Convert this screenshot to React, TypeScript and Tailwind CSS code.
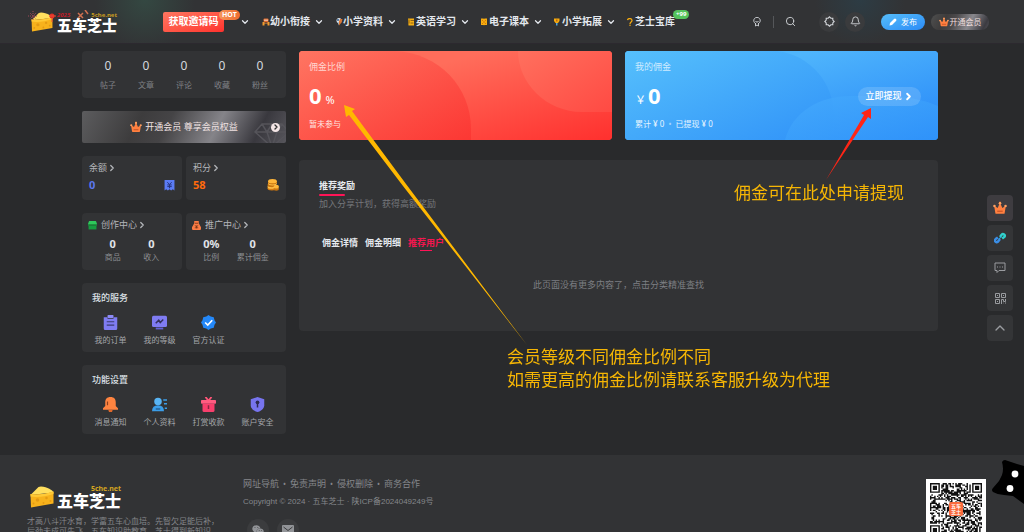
import type { ReactNode } from 'react'
import { Bell, ChevronDown, ChevronRight, ChevronUp, Search } from 'lucide-react'
import { FaWeixin } from 'react-icons/fa'

const stats = ['帖子', '文章', '评论', '收藏', '粉丝']

function Crown({ className }: { className: string }) {
  return (
    <svg viewBox="0 0 24 24" className={className} fill="none">
      <path d="M2 8l6 4 3-7a2 2 0 1 1 2 0l3 7 6-4-2 12.500a1.500 1.500 0 0 1-1.500 1.500h-13A1.500 1.500 0 0 1 4 20.500z" fill="#ff8040" />
      <circle cx="12" cy="4" r="2.200" fill="#ffa060" />
      <circle cx="2.500" cy="8.500" r="2.200" fill="#ffa060" />
      <circle cx="21.500" cy="8.500" r="2.200" fill="#ffa060" />
      <path d="M8 17.500h8" stroke="#b8441c" strokeWidth="1.600" strokeLinecap="round" />
    </svg>
  )
}

function Cheese({ className }: { className: string }) {
  return (
    <svg viewBox="0 0 48 44" className={className}>
      <path d="M1 18L17 2q2-1 5-1c13 1 23 7 25 12z" fill="#ffdf5e" />
      <path d="M1 16c13 3 31 0 46-5v24L2 43z" fill="#f7b21c" />
      <path d="M1 16c13 3 31 0 46-5v5C31 21 14 23 1 21z" fill="#ffc936" />
      <circle cx="15" cy="28" r="3.500" fill="#e39a14" />
      <circle cx="33" cy="24" r="2.500" fill="#e39a14" />
      <circle cx="27" cy="34" r="2" fill="#e39a14" />
      <circle cx="7" cy="35" r="2" fill="#e39a14" />
      <circle cx="41" cy="30" r="2" fill="#e39a14" />
    </svg>
  )
}

function NavIcon({ kind }: { kind: string }) {
  return (
    <svg viewBox="0 0 16 16" className="h-2 w-2 shrink-0" fill="none">
      {kind === 'kids' && (
        <>
          <rect x="3" y="1" width="10" height="7" rx="2" fill="#e06c2e" />
          <path d="M5 3h2v3H5zM9 3h2v3H9z" fill="#fff" />
          <path d="M1 8h14v7h-4v-4H5v4H1z" fill="#f29a2e" />
          <path d="M5 8h6v2H5z" fill="#7b4534" />
        </>
      )}
      {kind === 'pen' && (
        <>
          <circle cx="8" cy="5" r="5" fill="#dce6ee" />
          <path d="M4 2h4v4H4z" fill="#5b7fa6" />
          <path d="M10 2h5l-2 7-5 6-1-6z" fill="#dd7733" />
          <path d="M5 8h3v7z" fill="#a8c4d8" />
        </>
      )}
      {kind === 'word' && (
        <>
          <path d="M0 1h12v14H1z" fill="#f5b016" />
          <path d="M5 5h7M5 10h6M2 3v8" stroke="#6e4a12" strokeWidth="1.500" />
        </>
      )}
      {kind === 'book' && (
        <>
          <path d="M0 1h5l1 1 1-1h5v13H7l-1 1-1-1H0z" fill="#f7ac0f" />
          <path d="M2 4l3 3M10 4L7 7M2 12l3-3M10 12L7 9" stroke="#c36a0a" strokeWidth="1.500" />
        </>
      )}
      {kind === 'bulb' && (
        <>
          <path d="M0 1h11v5l-3 4H3L0 6z" fill="#f7ac0f" />
          <path d="M4 3h3v4H4z" fill="#b9650e" />
          <path d="M4 10h3v5H4z" fill="#4aa3df" />
        </>
      )}
      {kind === 'help' && (
        <>
          <path d="M1 4c1-4 9-4 9 1 0 3-4 3-4 7" stroke="#f7ac0f" strokeWidth="2.500" />
          <circle cx="6" cy="14.500" r="1.500" fill="#f7ac0f" />
        </>
      )}
    </svg>
  )
}

const navItems = [
  { kind: 'kids', label: '幼小衔接' },
  { kind: 'pen', label: '小学资料' },
  { kind: 'word', label: '英语学习' },
  { kind: 'book', label: '电子课本' },
  { kind: 'bulb', label: '小学拓展' },
]

function Header() {
  return (
    <header className="flex h-11 shrink-0 items-center border-b border-[#2c292f] bg-[#323335] bg-[radial-gradient(circle_at_145px_0px,#344842_0px,transparent_50px),radial-gradient(circle_at_860px_0px,#2d3c44_0px,transparent_45px)] pr-[35px] pl-[31px]">
      <a href="#" className="relative flex shrink-0 items-center gap-1">
        <Cheese className="h-5 w-[22px]" />
        <span className="flex flex-col">
          <span className="flex justify-between text-[6px] leading-[6px] font-bold text-[#c79a20]">
            <i className="text-[#c01c28]">2025</i>
            5che.net
          </span>
          <span className="text-[15px] leading-[14px] font-black text-white">五车芝士</span>
        </span>
        <svg viewBox="0 0 64 16" className="absolute -top-[2px] -left-1 h-4 w-16" fill="none">
          <path d="M6 1v10M1 6h10M3 3l6 6M9 3L3 9" stroke="#9b4a58" strokeWidth="1" strokeDasharray="1 1" />
          <circle cx="25" cy="6" r="2.500" fill="#e03328" />
          <path d="M25 8v4M22 6h7" stroke="#f04a32" />
          <path d="M51 3l5 5M56 3l-5 5M58 0l3 4" stroke="#cf7050" strokeWidth="1.500" />
        </svg>
      </a>

      <nav className="ml-[46px] flex shrink-0 items-center text-[10px] font-bold text-[#e4e8ee]">
        <div className="relative mr-3 flex items-center gap-4">
          <button className="h-5 w-[61px] rounded-xs bg-linear-to-br from-[#ff7560] to-[#ff2f2c] text-white">获取邀请码</button>
          <ChevronDown className="h-[10px] w-[10px]" strokeWidth={3} />
          <span className="absolute -top-[2px] left-14 rounded-full bg-linear-to-r from-[#f5975a] to-[#f06a2c] px-[3px] text-[7px] leading-[10px] text-white">HOT</span>
        </div>
        {navItems.map((item) => (
          <a key={item.kind} href="#" className="mr-[11px] flex items-center">
            <NavIcon kind={item.kind} />
            <span className="mr-1">{item.label}</span>
            <ChevronDown className="h-[10px] w-[10px]" strokeWidth={3} />
          </a>
        ))}
        <a href="#" className="relative flex items-center">
          <NavIcon kind="help" />
          芝士宝库
          <span className="absolute -top-1 left-[46px] rounded-full bg-[#55c35c] px-[3px] text-[6px] leading-[9px] text-white">+99</span>
        </a>
      </nav>

      <div className="ml-auto flex shrink-0 items-center text-[#d3d6da]">
        <button aria-label="签到">
          <svg viewBox="0 0 20 20" className="h-[10px] w-[10px]" fill="none" stroke="currentColor" strokeWidth="1.800">
            <path d="M7 13a6.500 6.500 0 1 1 6 0M7 8c1 3 5 3 6 0M7 12v6l3-2 3 2v-6" />
          </svg>
        </button>
        <span className="mx-[11px] h-3 w-px bg-[#55575a]" />
        <button aria-label="搜索">
          <Search className="h-[11px] w-[11px]" />
        </button>
        <button aria-label="切换主题" className="ml-[23px] flex h-5 w-5 items-center justify-center rounded-full bg-[#3a3b3d]">
          <svg viewBox="0 0 20 20" className="h-[11px] w-[11px]" fill="none" stroke="currentColor" strokeWidth="2">
            <path d="M10 1.500l2.500 2.500h3.500v3.500l2.500 2.500-2.500 2.500V16h-3.500L10 18.500 7.500 16H4v-3.500L1.500 10 4 7.500V4h3.500z" />
          </svg>
        </button>
        <button aria-label="通知" className="ml-[6px] flex h-5 w-5 items-center justify-center rounded-full bg-[#3a3b3d]">
          <Bell className="h-[11px] w-[11px]" />
        </button>
        <button className="ml-4 flex h-4 w-11 items-center justify-center gap-1 rounded-full bg-linear-to-br from-[#56bdfa] to-[#2c8bf6] text-[8px] text-white">
          <svg viewBox="0 0 16 16" className="h-2 w-2" fill="currentColor">
            <path d="M1 15l1-5 8-8q2-2 4 0t0 4l-8 8z" />
          </svg>
          发布
        </button>
        <button className="ml-[6px] flex h-4 w-[58px] items-center justify-center gap-px rounded-full bg-[linear-gradient(117deg,#4b4b4b_5%,#3e3c3c_25%,#4b494b_40%,#89888d_65%,#3b3a40_90%,#55555b_100%)] text-[8px] text-[#f0dede]">
          <Crown className="h-[10px] w-[10px]" />
          开通会员
        </button>
      </div>
    </header>
  )
}

function Card({ className = '', children }: { className?: string; children: ReactNode }) {
  return <section className={`rounded-sm bg-[#323335] ${className}`}>{children}</section>
}

function More({ children }: { children: ReactNode }) {
  return (
    <a href="#" className="flex items-center text-[9px] leading-3 text-[#b4b6ba]">
      {children}
      <ChevronRight className="h-[10px] w-[10px]" strokeWidth={3} />
    </a>
  )
}

function Figures({ items }: { items: { value: string; label: string }[] }) {
  return (
    <dl className="mt-[6px] flex justify-evenly text-center">
      {items.map((item) => (
        <div key={item.label} className="flex flex-col-reverse">
          <dt className="text-[8px] leading-3 text-[#8b8d91]">{item.label}</dt>
          <dd className="text-[11px] leading-[14px] font-bold text-[#e2e5ea]">{item.value}</dd>
        </div>
      ))}
    </dl>
  )
}

const services = [
  {
    label: '我的订单',
    icon: (
      <>
        <path d="M1 3h5v2h8V3h5v15q0 2-2 2H3q-2 0-2-2z" fill="#7f7cf2" />
        <rect x="6" y="0" width="8" height="4" rx="1" fill="#8d8af8" />
        <path d="M5 9h10M5 13.500h10" stroke="#3d3b72" strokeWidth="1.600" />
      </>
    ),
  },
  {
    label: '我的等级',
    icon: (
      <>
        <rect x="0" y="1" width="20" height="15" rx="2" fill="#7f7cf2" />
        <path d="M5 11l4-4 2 3 4-4" stroke="#33315c" strokeWidth="2" />
        <path d="M5 18h10" stroke="#6461d6" strokeWidth="2.500" />
      </>
    ),
  },
  {
    label: '官方认证',
    icon: (
      <>
        <path d="M10 0l3 2 4 1 1 4 2 3-2 3-1 4-4 1-3 2-3-2-4-1-1-4-2-3 2-3 1-4 4-1z" fill="#2488f8" />
        <path d="M5.500 10l3.500 3.500 6-6.500" stroke="#fff" strokeWidth="2.200" />
      </>
    ),
  },
]

const settings = [
  {
    label: '消息通知',
    icon: (
      <>
        <path d="M10 0c5 0 7 3 7 7v5l3 3v2H0v-2l3-3V7c0-4 2-7 7-7z" fill="#ff8440" />
        <path d="M7 17h6l-1 3H8z" fill="#e0682a" />
        <path d="M6 6v5" stroke="#8c3f1c" strokeWidth="1.600" />
      </>
    ),
  },
  {
    label: '个人资料',
    icon: (
      <>
        <circle cx="8" cy="6" r="5" fill="#58b4f4" />
        <path d="M0 19q0-8 8-8t8 8z" fill="#3b9de8" />
        <path d="M15 4h5M16 9h4M17 15h3" stroke="#3b9de8" strokeWidth="1.800" />
        <path d="M5 16h6" stroke="#1d4f7b" strokeWidth="1.500" />
      </>
    ),
  },
  {
    label: '打赏收款',
    icon: (
      <>
        <path d="M10 5L6 0M10 5l4-5" stroke="#ff5578" strokeWidth="2.500" />
        <rect x="0" y="4" width="20" height="5" rx="1" fill="#ff5c80" />
        <path d="M2 9h16v9q0 2-2 2H4q-2 0-2-2z" fill="#f83f6c" />
        <path d="M10 11v5" stroke="#8a2440" strokeWidth="2" />
      </>
    ),
  },
  {
    label: '账户安全',
    icon: (
      <>
        <path d="M10 0l9 3v8c0 5-5 8-9 9-4-1-9-4-9-9V3z" fill="#7774ee" />
        <circle cx="10" cy="7" r="2.500" fill="#2c2a50" />
        <path d="M10 8v6" stroke="#2c2a50" strokeWidth="2" />
      </>
    ),
  },
]

function IconGrid({ title, items }: { title: string; items: typeof services }) {
  return (
    <Card className="px-1 pt-2 pb-[5px]">
      <h2 className="pl-[6px] text-[9px] leading-[14px] font-medium text-[#dde1e7]">{title}</h2>
      <div className="mt-[10px] grid grid-cols-4">
        {items.map((item) => (
          <a key={item.label} href="#" className="flex flex-col items-center gap-[3px] text-[8px] leading-[14px] text-[#a4a6aa]">
            <svg viewBox="0 0 20 20" className="h-[15px] w-[15px]" fill="none">
              {item.icon}
            </svg>
            {item.label}
          </a>
        ))}
      </div>
    </Card>
  )
}

function Sidebar() {
  return (
    <aside className="flex w-[204px] shrink-0 flex-col gap-[13px]">
      <Card className="flex px-[7px] py-[6px]">
        {stats.map((label) => (
          <a key={label} href="#" className="flex flex-1 flex-col items-center gap-[3px]">
            <span className="text-[12px] leading-[18px] text-[#d5d9df]">0</span>
            <span className="text-[8px] leading-[14px] text-[#7f8185]">{label}</span>
          </a>
        ))}
      </Card>

      <a
        href="#"
        className="relative flex h-8 items-center justify-center gap-[3px] overflow-hidden rounded-xs bg-[linear-gradient(117deg,#5c5c5e_0%,#3d3c3d_28%,#454446_42%,#858489_65%,#39383e_85%,#57565c_100%)] text-[9px] text-[#f0e2e2]"
      >
        <Crown className="h-3 w-3" />
        开通会员 尊享会员权益
        <svg viewBox="0 0 36 24" className="absolute -right-1 -bottom-1 h-6 w-9" fill="none" stroke="#55545a" strokeWidth="1.500">
          <path d="M8 1h20l7 8-17 15L1 9zM1 9h34M8 1l5 8 5 15 5-15 5-8M13 9l5-8 5 8" />
        </svg>
        <span className="absolute right-[6px] flex h-[9px] w-[9px] items-center justify-center rounded-full bg-[#f4e6e6] text-[#333]">
          <ChevronRight className="h-2 w-2" strokeWidth={4} />
        </span>
      </a>

      <div className="grid grid-cols-2 gap-1">
        <Card className="px-[7px] pt-[6px] pb-[7px]">
          <More>余额</More>
          <div className="mt-[3px] flex items-center justify-between">
            <span className="text-[11px] leading-4 font-bold text-[#5c78ee]">0</span>
            <svg viewBox="0 0 20 20" className="h-[11px] w-[11px]" fill="none">
              <path d="M1 0h18v19l-3-2-3 2-3-2-3 2-3-2-3 2z" fill="#5b7cf5" />
              <path d="M6 4l4 4 4-4M10 8v7M6 9h8M6 12h8" stroke="#26357c" strokeWidth="1.800" />
            </svg>
          </div>
        </Card>
        <Card className="px-[7px] pt-[6px] pb-[7px]">
          <More>积分</More>
          <div className="mt-[3px] flex items-center justify-between">
            <span className="text-[11px] leading-4 font-bold text-[#ff6a0c]">58</span>
            <svg viewBox="0 0 22 22" className="h-3 w-3">
              <ellipse cx="9" cy="17" rx="8" ry="4" fill="#d67a10" />
              <ellipse cx="9" cy="14" rx="8" ry="4" fill="#ffc04a" />
              <ellipse cx="9" cy="11" rx="8" ry="4" fill="#c87410" />
              <ellipse cx="10" cy="8" rx="8" ry="4" fill="#ffc04a" />
              <ellipse cx="10" cy="6" rx="8" ry="4" fill="#c87410" />
              <ellipse cx="10" cy="4" rx="8" ry="4" fill="#ffb63a" />
              <ellipse cx="17" cy="18" rx="5" ry="3.500" fill="#c87410" />
              <ellipse cx="17" cy="14" rx="5" ry="3.500" fill="#ffb63a" />
            </svg>
          </div>
        </Card>
      </div>

      <div className="grid grid-cols-2 gap-1">
        <Card className="pt-[6px] pb-[7px]">
          <div className="flex items-center gap-1 pl-[6px]">
            <svg viewBox="0 0 16 16" className="h-[9px] w-[9px]">
              <path d="M2 0h12l2 5v3H0V5z" fill="#2fc85c" />
              <path d="M1 8h14v7H1z" fill="#179c40" />
              <path d="M0 6h16v2H0z" fill="#15702f" />
            </svg>
            <More>创作中心</More>
          </div>
          <Figures items={[{ value: '0', label: '商品' }, { value: '0', label: '收入' }]} />
        </Card>
        <Card className="pt-[6px] pb-[7px]">
          <div className="flex items-center gap-1 pl-[6px]">
            <svg viewBox="0 0 16 16" className="h-[9px] w-[9px]" fill="none">
              <path d="M4 0h8v4l4 7v3q0 2-2 2H2q-2 0-2-2v-3l4-7z" fill="#fb7c45" />
              <path d="M5 4h6M8 8v5M5 8l3 2 3-2M5 12h6" stroke="#713016" strokeWidth="1.400" />
            </svg>
            <More>推广中心</More>
          </div>
          <Figures items={[{ value: '0%', label: '比例' }, { value: '0', label: '累计佣金' }]} />
        </Card>
      </div>

      <IconGrid title="我的服务" items={services} />
      <IconGrid title="功能设置" items={settings} />
    </aside>
  )
}

function CommissionCards() {
  return (
    <div className="grid grid-cols-2 gap-[13px] text-white">
      <section className="relative overflow-hidden rounded-sm bg-[#fb4a42] px-[10px] pt-[10px] pb-[9px]">
        <svg viewBox="0 0 313 89" preserveAspectRatio="none" className="absolute inset-0 h-full w-full">
          <defs>
            <linearGradient id="redBase" x1="0" y1="0" x2="1" y2="1">
              <stop offset="0.300" stopColor="#ff6d5b" />
              <stop offset="1" stopColor="#ff302e" />
            </linearGradient>
            <linearGradient id="redLeft" x1="0" y1="0" x2="1" y2="1">
              <stop offset="0" stopColor="#ff7562" />
              <stop offset="1" stopColor="#fc3733" />
            </linearGradient>
            <linearGradient id="redCorner" x1="0" y1="0" x2="1" y2="1">
              <stop offset="0" stopColor="#ff705e" />
              <stop offset="1" stopColor="#ff4a43" />
            </linearGradient>
          </defs>
          <path d="M0 0h313v89H0z" fill="url(#redBase)" />
          <path d="M0 0h96c44 2 76 36 76 78v11H0z" fill="url(#redLeft)" />
          <path d="M219 0c0 32 28 61 64 61h30V0z" fill="url(#redCorner)" />
        </svg>
        <div className="relative">
          <h2 className="text-[9px] leading-3 text-[#ffd6d0]">佣金比例</h2>
          <p className="mt-[5px] flex items-baseline gap-1 leading-[34px]">
            <b className="text-[22px]">0</b>
            <span className="text-[11px]">%</span>
          </p>
          <p className="text-[8px] leading-[14px] text-[#ffe6e2]">暂未参与</p>
        </div>
      </section>

      <section className="relative overflow-hidden rounded-sm bg-[#3fa3fa] px-[10px] pt-[10px] pb-[9px]">
        <svg viewBox="0 0 313 89" preserveAspectRatio="none" className="absolute inset-0 h-full w-full">
          <defs>
            <linearGradient id="blueBase" x1="0" y1="0" x2="1" y2="1">
              <stop offset="0.300" stopColor="#4fb5fc" />
              <stop offset="1" stopColor="#2686f8" />
            </linearGradient>
            <linearGradient id="blueLeft" x1="0" y1="0" x2="1" y2="1">
              <stop offset="0" stopColor="#56c0fc" />
              <stop offset="1" stopColor="#3092f8" />
            </linearGradient>
            <linearGradient id="blueCorner" x1="0" y1="0" x2="1" y2="1">
              <stop offset="0" stopColor="#45aafc" />
              <stop offset="1" stopColor="#3195fa" />
            </linearGradient>
          </defs>
          <path d="M0 0h313v89H0z" fill="url(#blueBase)" />
          <path d="M0 0h152c34 4 57 33 57 65q0 14-5 24H0z" fill="url(#blueLeft)" />
          <path d="M160 89c7-28 35-44 65-44h35q30 0 53 10v34z" fill="url(#blueCorner)" fillOpacity="0.800" />
        </svg>
        <div className="relative flex items-center justify-between">
          <div>
            <h2 className="text-[9px] leading-3 text-[#cdeaff]">我的佣金</h2>
            <p className="mt-[5px] flex items-baseline gap-[2px] leading-[34px]">
              <span className="text-[11px]">￥</span>
              <b className="text-[22px]">0</b>
            </p>
            <p className="text-[8px] leading-[14px] text-[#e4f4ff]">
              累计 ¥ 0 <span className="mx-[2px] opacity-60">•</span> 已提现 ¥ 0
            </p>
          </div>
          <button className="mr-[7px] flex h-[19px] w-[63px] items-center justify-center gap-px rounded-full bg-white/15 text-[9px] font-medium">
            立即提现
            <ChevronRight className="h-[11px] w-[11px]" strokeWidth={4} />
          </button>
        </div>
      </section>
    </div>
  )
}

function Main() {
  return (
    <main className="flex min-w-0 flex-1 flex-col gap-5">
      <CommissionCards />
      <Card className="px-5 pt-5 pb-10">
        <h2 className="text-[9px] leading-3 font-bold text-[#e8ebf0]">推荐奖励</h2>
        <div className="mt-[2px] h-[2px] w-[26px] rounded-full bg-[#ff1457]" />
        <p className="mt-[2px] text-[9px] leading-3 text-[#75777b]">加入分享计划，获得高额奖励</p>
        <div role="tablist" className="mt-[27px] flex gap-[7px] pl-[3px] text-[9px] leading-3 font-bold text-[#e4e8ee]">
          <button role="tab" aria-selected="false">佣金详情</button>
          <button role="tab" aria-selected="false">佣金明细</button>
          <button role="tab" aria-selected="true" className="relative text-[#f5164f]">
            推荐用户
            <span className="absolute -bottom-[2px] left-3 h-px w-3 bg-[#ff1457]" />
          </button>
        </div>
        <p className="mt-[30px] text-center text-[9px] leading-3 text-[#7d7f83]">此页面没有更多内容了，点击分类精准查找</p>
      </Card>
    </main>
  )
}

const QR_SIZE = 37

function isDark(x: number, y: number) {
  // finder squares in three corners
  const corners = [[0, 0], [QR_SIZE - 7, 0], [0, QR_SIZE - 7]]
  for (const [cx, cy] of corners) {
    const d = Math.max(Math.abs(x - cx - 3), Math.abs(y - cy - 3))
    if (d === 4) return false
    if (d <= 3) return d !== 2
  }
  const n = Math.sin(x * 12.9898 + y * 78.233) * 43758.5453
  return n - Math.floor(n) > 0.48
}

let qrPath = ''
for (let y = 0; y < QR_SIZE; y++) {
  for (let x = 0; x < QR_SIZE; x++) {
    if (isDark(x, y)) qrPath += `M${x} ${y}h1v1h-1z`
  }
}

function Footer() {
  return (
    <footer className="mt-[21px] flex shrink-0 items-start bg-[#323335] pr-[38px] pl-[27px] text-[#85878b]">
      <div className="mt-[30px] w-[216px] shrink-0">
        <a href="#" className="flex items-center gap-[3px] pl-[3px]">
          <Cheese className="h-[22px] w-6" />
          <span className="flex flex-col">
            <span className="self-end text-[7px] leading-2 font-bold text-[#d5a51f]">5che.net</span>
            <span className="text-[16px] leading-4 font-black text-white">五车芝士</span>
          </span>
        </a>
        <p className="mt-[7px] text-[8px] leading-[10px] whitespace-nowrap">
          才高八斗汗水育，学富五车心血培。先智欠足能后补，
          <br />
          后劲未成可先飞，五车知识助教育，芝士得到新知识。
        </p>
      </div>
      <div className="mt-[22px]">
        <div className="flex items-center gap-1 text-[9px] leading-[14px]">
          <a href="#">网址导航</a>
          <span className="text-[8px]">•</span>
          <a href="#">免责声明</a>
          <span className="text-[8px]">•</span>
          <a href="#">侵权删除</a>
          <span className="text-[8px]">•</span>
          <a href="#">商务合作</a>
        </div>
        <p className="mt-1 font-['Liberation_Sans','Noto_Sans_CJK_SC',sans-serif] text-[8px] leading-[14px]">
          Copyright © 2024 · 五车芝士 · 陕ICP备2024049249号
        </p>
        <div className="mt-[10px] flex gap-2 pl-1">
          <a href="#" aria-label="微信" className="flex h-[22px] w-[22px] items-center justify-center rounded-full bg-[#3b3c3e] text-[#929498]">
            <FaWeixin className="h-3 w-3" />
          </a>
          <a href="#" aria-label="邮箱" className="flex h-[22px] w-[22px] items-center justify-center rounded-full bg-[#3b3c3e]">
            <svg viewBox="0 0 24 20" className="h-[10px] w-3" fill="none">
              <rect width="24" height="20" rx="2" fill="#929498" />
              <path d="M3 4l9 7 9-7" stroke="#3b3c3e" strokeWidth="2" />
            </svg>
          </a>
        </div>
      </div>
      <div className="relative mt-6 ml-auto flex h-[60px] w-[60px] items-center justify-center bg-white">
        <svg viewBox="0 0 37 37" className="h-[52px] w-[52px]" fill="#111">
          <path d={qrPath} />
        </svg>
        <span className="absolute flex h-[14px] w-[14px] items-center justify-center rounded-xs bg-[#fb6a3c] text-center text-[5px] leading-[6px] font-bold text-white">
          五车
          <br />
          芝士
        </span>
      </div>
    </footer>
  )
}

function FloatButtons() {
  const box = 'flex h-[26px] w-[26px] items-center justify-center rounded-sm bg-[#343537] text-[#9a9ca0]'
  return (
    <div className="fixed top-[195px] right-[11px] flex flex-col gap-1">
      <button aria-label="会员" className="flex h-[26px] w-[26px] items-center justify-center rounded-sm bg-[#3e3c40]">
        <Crown className="h-[14px] w-[14px]" />
      </button>
      <button aria-label="链接" className={box}>
        <svg viewBox="0 0 22 22" className="h-3 w-3" fill="none" strokeWidth="4.500">
          <path d="M11 9l3-4a3 3 0 0 1 5 4l-4 3" stroke="#31d0cc" />
          <path d="M11 13l-4 5a3 3 0 0 1-4-5l4-3" stroke="#3b8ee6" />
          <path d="M9 13l4-4" stroke="#2aa6dc" strokeWidth="2" />
        </svg>
      </button>
      <button aria-label="私信" className={box}>
        <svg viewBox="0 0 24 24" className="h-3 w-3" fill="none" stroke="currentColor" strokeWidth="2">
          <path d="M2 2h20v15H10l-4 4v-4H2z" />
          <path d="M6 10h2M11 10h2M16 10h2" />
        </svg>
      </button>
      <button aria-label="二维码" className={box}>
        <svg viewBox="0 0 22 22" className="h-[11px] w-[11px]" fill="none" stroke="currentColor" strokeWidth="2">
          <path d="M1 1h8v8H1zM13 1h8v8h-8zM1 13h8v8H1zM4 5h2M16 5h2M4 17h2M13 22v-9h4v4h4v-5M17 20h1M20 20h2" />
        </svg>
      </button>
      <button aria-label="返回顶部" className={box}>
        <ChevronUp className="h-4 w-4" strokeWidth={2} />
      </button>
    </div>
  )
}

function Annotations() {
  return (
    <div className="pointer-events-none absolute top-0 left-0 h-[532px] w-[1024px] text-[17px] leading-[23px] text-[#f6b604]">
      <svg viewBox="0 0 1024 532" className="absolute inset-0 h-full w-full">
        <path d="M344 105l11 4-3 2 54 73 121 161-124-159-54-71-3 2z" fill="#ffb800" />
        <path d="M871 108v11l-3-2-42 63 38-65-3-2z" fill="#ff2516" />
      </svg>
      <p className="absolute top-[181px] left-[734px] whitespace-nowrap">佣金可在此处申请提现</p>
      <p className="absolute top-[345px] left-[507px] whitespace-nowrap">
        会员等级不同佣金比例不同
        <br />
        如需更高的佣金比例请联系客服升级为代理
      </p>
    </div>
  )
}

function Cat() {
  return (
    <svg viewBox="0 0 32 46" className="fixed right-0 bottom-[26px] h-[46px] w-8">
      <path d="M10 2q1-2 3-2l12 4 7 2v38l-11-8-9-1q-6 0-11-3-2-2 0-4l6-7 3-6q2-6 0-13z" fill="#000" />
      <circle cx="23" cy="14" r="3.400" fill="#fff" />
      <circle cx="18" cy="28.500" r="3.400" fill="#fff" />
    </svg>
  )
}

export default function App() {
  return (
    <div className="relative flex h-screen flex-col overflow-hidden bg-[#292a2c] font-['Noto_Sans','Noto_Sans_CJK_SC',sans-serif]">
      <Header />
      <div className="shrink-0 pt-[7px] pr-1">
        <div className="mx-auto flex w-full max-w-[856px] items-start gap-[13px]">
          <Sidebar />
          <Main />
        </div>
      </div>
      <Footer />
      <FloatButtons />
      <Cat />
      <Annotations />
    </div>
  )
}
